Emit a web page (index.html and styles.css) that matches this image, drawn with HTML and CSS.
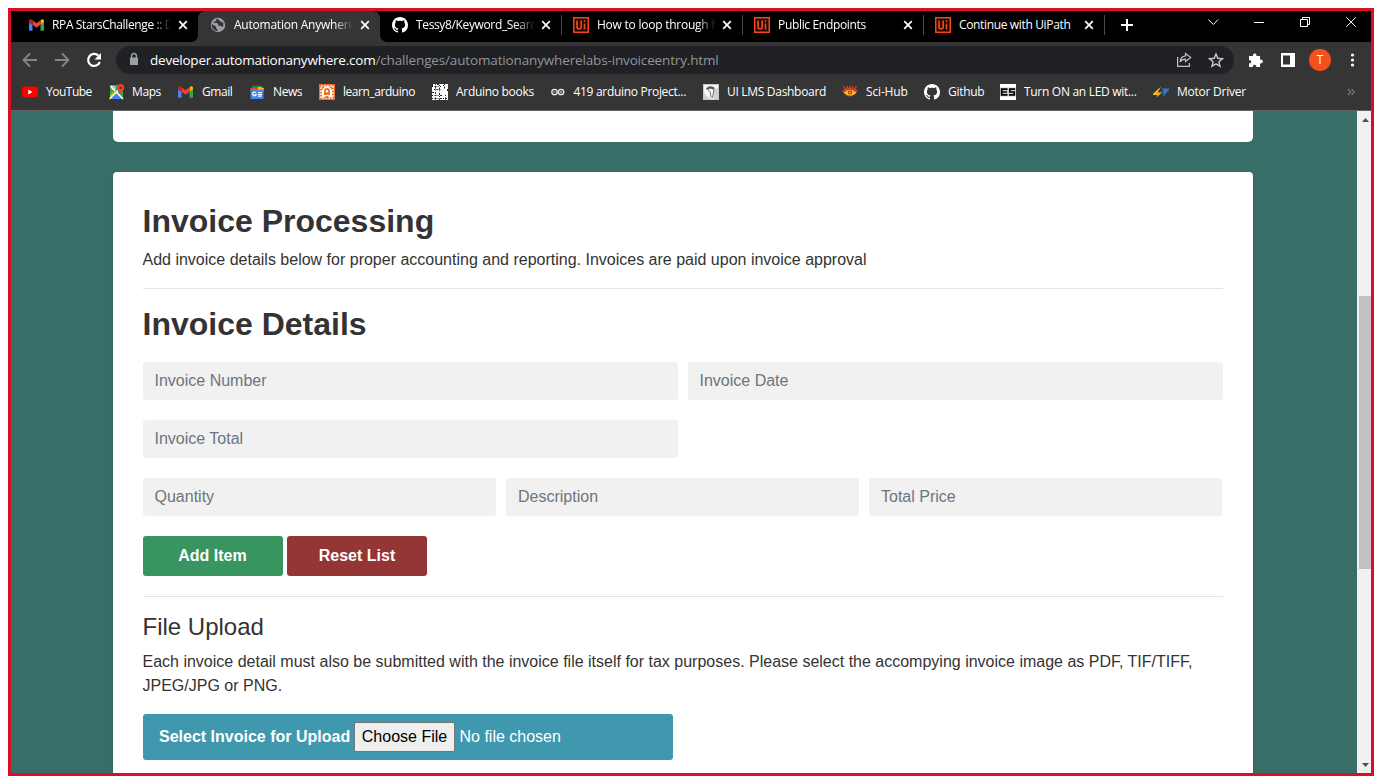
FILE: index.html
```html
<!DOCTYPE html>
<html lang="en">
<head>
<meta charset="utf-8">
<title>Automation Anywhere Labs - Invoice Entry</title>
<link rel="stylesheet" href="styles.css">
</head>
<body>
<svg class="defs" width="0" height="0">
  <symbol id="gmail" viewBox="0 0 16 12"><path fill="#4285f4" d="M1 12h2.700V5.800L0 3v8a1 1 0 0 0 1 1z"/><path fill="#34a853" d="M12.300 12H15a1 1 0 0 0 1-1V3l-3.700 2.800z"/><path fill="#fbbc04" d="M12.300 1v4.800L16 3V1.600C16 .2 14.400-.5 13.300.3z"/><path fill="#ea4335" d="M3.700 5.800V1L8 4.200 12.300 1v4.800L8 9z"/><path fill="#c5221f" d="M0 1.600V3l3.700 2.800V1L2.700.3C1.600-.5 0 .2 0 1.600z"/></symbol>
  <symbol id="github" viewBox="0 0 16 16"><path fill="#fff" d="M8 0C3.580 0 0 3.580 0 8c0 3.540 2.290 6.530 5.470 7.590.4.070.55-.17.55-.38 0-.19-.010-.82-.010-1.490-2.010.37-2.530-.49-2.690-.94-.090-.23-.48-.94-.82-1.130-.28-.15-.68-.52-.010-.53.63-.010 1.080.58 1.230.82.72 1.210 1.870.87 2.330.66.070-.52.28-.87.510-1.070-1.780-.2-3.640-.89-3.640-3.950 0-.87.310-1.590.82-2.150-.080-.2-.36-1.020.080-2.120 0 0 .67-.21 2.200.82.64-.18 1.320-.27 2-.27s1.360.090 2 .27c1.530-1.040 2.200-.82 2.200-.82.44 1.100.16 1.920.080 2.120.510.56.82 1.270.82 2.150 0 3.070-1.870 3.750-3.650 3.950.29.25.54.73.54 1.480 0 1.070-.010 1.930-.010 2.200 0 .21.15.46.55.38A8.010 8.010 0 0 0 16 8c0-4.420-3.580-8-8-8z"/></symbol>
  <symbol id="uipath" viewBox="0 0 16 16"><path fill="#1d0500" stroke="#fa4616" stroke-width="1.500" d="M.75.75h14.500v14.500H.75z"/><path fill="none" stroke="#fa4616" stroke-width="1.700" d="M4 3.500v6.300q0 2.200 2.100 2.200t2.100-2.200V3.500M11.500 6.500v6M11.500 3.300v1.800"/></symbol>
  <symbol id="cross" viewBox="0 0 10 10"><path fill="none" stroke="#fff" stroke-width="1.700" d="M1.200 1.200l7.600 7.600M8.800 1.200L1.200 8.800"/></symbol>
</svg>
<div class="window">
  <div class="tabs">
    <div class="tab"><svg class="fav"><use href="#gmail" x="0" y="2" width="15" height="12"/></svg><span class="title t1">RPA StarsChallenge :: D</span><svg class="x"><use href="#cross"/></svg></div>
    <div class="tab active"><svg class="fav" viewBox="0 0 16 16"><circle cx="8" cy="8" r="7.200" fill="#9aa0a6"/><path fill="#353535" d="M7.200 1.700 6 2.800v1.500H4.600L3.500 6H7l1.300 1.200v1.500h2.500L12.500 10l.8-1.200V5.500L11 5 9.300 3.300zM1.700 7l4.200 2.500.3 1.700 1.200 1.200v1.900L4.200 13 2 10.300z"/></svg><span class="title t2">Automation Anywhere</span><svg class="x"><use href="#cross"/></svg></div>
    <div class="tab"><svg class="fav"><use href="#github"/></svg><span class="title t3">Tessy8/Keyword_Searc</span><svg class="x"><use href="#cross"/></svg></div>
    <div class="tab sep"><svg class="fav"><use href="#uipath"/></svg><span class="title t4">How to loop through f</span><svg class="x"><use href="#cross"/></svg></div>
    <div class="tab sep"><svg class="fav"><use href="#uipath"/></svg><span class="title t5">Public Endpoints</span><svg class="x"><use href="#cross"/></svg></div>
    <div class="tab sep"><svg class="fav"><use href="#uipath"/></svg><span class="title t6">Continue with UiPath</span><svg class="x"><use href="#cross"/></svg></div>
    <div class="newtab sep"><svg width="12" height="12"><path stroke="#fff" stroke-width="2" d="M6 0v12M0 6h12"/></svg></div>
    <div class="controls">
      <svg viewBox="0 0 46 22"><path d="M18.500 8.500l4.800 5 4.800-5"/></svg>
      <svg viewBox="0 0 46 22"><path d="M18 11.500h10"/></svg>
      <svg viewBox="0 0 46 22"><path d="M18.500 8.500h7v7h-7zM20.500 8.500v-2h7v7h-2"/></svg>
      <svg viewBox="0 0 46 22"><path d="M18.300 6.300l9.500 9.500M27.800 6.300l-9.500 9.500"/></svg>
    </div>
  </div>
  <div class="toolbar">
    <svg class="cell dim" viewBox="0 0 32 32"><path d="M23 16H10M16 9.500 9.500 16l6.500 6.500"/></svg>
    <svg class="cell dim" viewBox="0 0 32 32"><path d="M9 16h13M16 9.500l6.500 6.500-6.500 6.500"/></svg>
    <svg class="cell" viewBox="0 0 32 32"><path fill="none" stroke="#fff" stroke-width="2.200" d="M21.800 18a6 6 0 1 1-1.300-6.200"/><path fill="#fff" d="M23 9v6.500h-6.500z"/></svg>
    <div class="omnibox">
      <svg class="cell" viewBox="0 0 32 32"><path fill="#9aa0a6" d="M12 13.500h8v7.500h-8z"/><path fill="none" stroke="#9aa0a6" stroke-width="1.400" d="M13.600 14v-2.100a2.400 2.400 0 0 1 4.800 0V14"/></svg>
      <div class="url"><span class="host">developer.automationanywhere.com</span><span class="path">/challenges/automationanywherelabs-invoiceentry.html</span></div>
      <svg class="cell" viewBox="0 0 32 32"><path fill="none" stroke="#bdc1c6" stroke-width="1.200" d="M9.600 13v9.400h11.800V19M17.500 9.500l5.200 4-5.200 4v-2.300c-2.500 0-4.300.8-5.500 2.800.3-3.500 2-5.800 5.500-6.200z"/></svg>
      <svg class="cell" viewBox="0 0 32 32"><path fill="none" stroke="#c8cbcf" stroke-width="1.400" d="M16 10l1.800 4.300 4.700.4-3.600 3.100 1.100 4.500-4-2.400-4 2.400 1.100-4.500-3.600-3.100 4.700-.4z"/></svg>
    </div>
    <svg class="cell" viewBox="0 0 32 32"><path fill="#fff" d="M9 12h4c-.6-3 3.600-3.300 3.500-.5V12H20v3.600c3.800-.4 3.800 4.200 0 3.800V23h-3.600c0-3-3.600-3-3.600 0H9v-3.600c3 0 3-3.500 0-3.500z"/></svg>
    <svg class="cell" viewBox="0 0 32 32"><path fill="#fff" fill-rule="evenodd" d="M9 9h14v14H9zM11 11.500v9h7v-9z"/></svg>
    <div class="cell"><span class="avatar">T</span></div>
    <svg class="cell" viewBox="0 0 32 32"><g fill="#fff"><circle cx="16.500" cy="11" r="1.600"/><circle cx="16.500" cy="16" r="1.600"/><circle cx="16.500" cy="21" r="1.600"/></g></svg>
  </div>
  <div class="bookmarks">
    <div class="bm"><svg viewBox="0 0 16 16"><rect y="2.500" width="16" height="11" rx="3" fill="#f00"/><path fill="#fff" d="M6.300 5.500v5L10.500 8z"/></svg><span class="b1">YouTube</span></div>
    <div class="bm"><svg viewBox="0 0 16 16"><path fill="#34a853" d="M1 1h13v14H1z"/><path fill="#4285f4" d="M8 8.500 14.500 15H2z"/><path stroke="#fff" stroke-width="1.500" d="M.5 15 11 4.500M1.500 2l12.500 13"/><path stroke="#fbbc04" stroke-width="1.500" d="M1 12.500 7 6.500"/><circle cx="4.500" cy="4" r="1.600" fill="none" stroke="#fff"/><path fill="#ea4335" d="M11.500 0a3.700 3.700 0 0 1 3.700 3.700c0 2.500-2.700 3.800-3.700 6.800-1-3-3.700-4.300-3.700-6.800A3.700 3.700 0 0 1 11.500 0z"/><circle cx="11.500" cy="3.700" r="1.200" fill="#8c1a11"/></svg><span class="b2">Maps</span></div>
    <div class="bm"><svg><use href="#gmail" x="0" y="2" width="15" height="12"/></svg><span class="b3">Gmail</span></div>
    <div class="bm"><svg viewBox="0 0 16 16"><path fill="#188038" d="M3 1.500h10V6H3z"/><path fill="#fbbc04" d="M9 2.500l6 1.500-1 5H8z"/><path fill="#ea4335" d="M1 4l7-1v4H2z"/><rect x="1.500" y="5.500" width="13" height="9.500" rx="1" fill="#4285f4"/><path fill="none" stroke="#fff" stroke-width="1.200" d="M7 8.700a1.900 1.900 0 1 0 .3 1.900H5.500M9 8.500h4M9 10.300h4M9 12.100h3.500"/></svg><span class="b4">News</span></div>
    <div class="bm"><svg viewBox="0 0 16 16"><path fill="#e8742a" d="M0 0h16v16H0z"/><path fill="none" stroke="#fff" stroke-width="1.500" stroke-dasharray="1.700 1.300" d="M2 2h12v12H2z"/><path fill="#fff" d="M3 13V6l3-3.500h4L13 6v7z"/><path fill="#e8742a" d="M5 11V7q0-3 3-3t3 3v4zM6.500 12h3v2h-3z"/><circle cx="8" cy="7.300" r="1.200" fill="#fff"/></svg><span class="b5">learn_arduino</span></div>
    <div class="bm"><svg viewBox="0 0 16 16"><path fill="#fff" d="M0 0h16v16H0z"/><path fill="none" stroke="#222" stroke-width="1" stroke-dasharray="1 1.500 2 1" d="M0 2.500h9M2 5.500h7M0 11.500h10M0 14.500h15M3.500 0v16M7.500 1v15M12.500 0v5M13.500 11v5"/><path fill="#222" d="M0 0h1v2H0zM5 0h2v1H5zM11 1h1v1h-1zM15 5h1v2h-1zM0 8h2v1H0z"/></svg><span class="b6">Arduino books</span></div>
    <div class="bm"><svg viewBox="0 0 16 16"><g fill="#26343b" stroke="#e8edef" stroke-width="1.300"><circle cx="4.500" cy="8" r="2.700"/><circle cx="11.100" cy="8" r="2.700"/></g><path stroke="#e8edef" stroke-width=".7" d="M3.300 8h2.400M9.900 8h2.400M11.100 6.800v2.400"/></svg><span class="b7">419 arduino Project...</span></div>
    <div class="bm"><svg viewBox="0 0 16 16"><path fill="#c9c9c9" d="M0 0h16v16H0z"/><path fill="#f6f6f6" d="M1 1h14v14H1z"/><path fill="#d0d0d0" d="M1 9l6 6H1zM10 6l5-2v11h-4z"/><path fill="#555" d="M3 4.500q4-4 9-.5l-1.500 1.500-3.500-1-3 1.500z"/><path fill="none" stroke="#777" d="M4 5q3 1 3.500 4l.5 5M11 5l-1.500 9"/></svg><span class="b8">UI LMS Dashboard</span></div>
    <div class="bm"><svg viewBox="0 0 16 16"><path fill="none" stroke="#d9422b" stroke-width="1.300" d="M1.500 2.500l2.500 3M5 2l1 3M8 1.700V5M11 2l-1 3M14.500 2.500l-2.500 3"/><path fill="#d9422b" d="M0 6.500q8-5 16 0-1.500 1-2 3-6 6-12 0Q1.500 7.500 0 6.500z"/><path fill="#f7c325" d="M1.500 8.700q6.500-5.400 13 0-6.500 5.400-13 0z"/><circle cx="8" cy="8.500" r="2.100" fill="#b5281b"/><circle cx="8" cy="8.500" r=".9" fill="#f7c325"/></svg><span class="b9">Sci-Hub</span></div>
    <div class="bm"><svg><use href="#github"/></svg><span class="b10">Github</span></div>
    <div class="bm"><svg viewBox="0 0 16 16"><path fill="#fff" d="M0 0h16v16H0z"/><path fill="#ccc" d="M0 3.500h16v9H0z"/><path fill="none" stroke="#000" stroke-width="1.700" d="M7.500 5.200H1.700v5.700h5.800M2 8h5M15 5.200H9.900V8h4.300v2.900H9"/></svg><span class="b11">Turn ON an LED wit...</span></div>
    <div class="bm"><svg viewBox="0 0 16 16"><path fill="#f4b51e" d="M8 2.500 0 9.800V11h4.500L3.500 13.500 9 8.500H4.800z"/><path fill="#3478c0" d="M8.500 4.500H16V6l-6.500 7.500 1.300-4.800H8L7.500 7.500l3.700-.3z"/></svg><span class="b12">Motor Driver</span></div>
    <svg class="more" viewBox="0 0 8 8"><path fill="none" stroke="#777" stroke-width="1.200" d="M.8 1l3 3-3 3M4.500 1l3 3-3 3"/></svg>
  </div>
  <div class="viewport">
    <main class="page">
      <section class="card previous"></section>
      <section class="card">
        <h1>Invoice Processing</h1>
        <p>Add invoice details below for proper accounting and reporting. Invoices are paid upon invoice approval</p>
        <hr>
        <h1>Invoice Details</h1>
        <div class="row two"><input placeholder="Invoice Number"><input placeholder="Invoice Date"></div>
        <div class="row two"><input placeholder="Invoice Total"></div>
        <div class="row three"><input placeholder="Quantity"><input placeholder="Description"><input placeholder="Total Price"></div>
        <div class="buttons"><button class="btn add">Add Item</button><button class="btn reset">Reset List</button></div>
        <hr>
        <h4>File Upload</h4>
        <p>Each invoice detail must also be submitted with the invoice file itself for tax purposes. Please select the accompying invoice image as PDF, TIF/TIFF, JPEG/JPG or PNG.</p>
        <div class="upload"><b>Select Invoice for Upload</b><button class="choose">Choose File</button><span>No file chosen</span></div>
      </section>
    </main>
    <div class="scrollbar">
      <svg width="7" height="4"><path fill="#505050" d="M0 4 3.500 0 7 4z"/></svg>
      <div class="thumb"></div>
      <svg width="7" height="4"><path fill="#505050" d="M0 0h7L3.500 4z"/></svg>
    </div>
  </div>
</div>
</body>
</html>
```
FILE: styles.css
```css
* { box-sizing: border-box; }
body { margin: 0; padding: 8px; background: #fff; height: 784px; overflow: hidden; font-family: "Liberation Sans", Arial, sans-serif; }
.defs { position: absolute; }
.window { width: 1366px; height: 768px; border: 3px solid #d91023; display: flex; flex-direction: column; overflow: hidden; background: #353535; }
svg { display: block; flex: none; }

.tabs, .toolbar, .bookmarks { font-family: "Open Sans", "Noto Sans", sans-serif; color: #fff; display: flex; }
.tabs { height: 31px; background: #000; padding-left: 7px; font-size: 12px; flex: none; }
.tab { width: 181px; height: 31px; display: flex; align-items: center; padding: 0 0 3px 12px; flex: none; }
.tab.active { background: #353535; border-radius: 7px 7px 0 0; box-shadow: -7px 7px 0 #353535, 7px 7px 0 #353535; }
.tab:first-child { width: 180px; padding-left: 11px; border-radius: 0 0 7px 0; background: #000; z-index: 1; }
.tab.active { width: 182px; }
.tab:nth-child(3) { border-radius: 0 0 0 7px; background: #000; z-index: 1; }
.sep { background: linear-gradient(#4a4a4a, #4a4a4a) 0 4px / 1px 20px no-repeat; }
.fav { width: 16px; height: 16px; margin-right: 8px; }
.title { width: 119px; margin-right: 6px; overflow: hidden; white-space: nowrap; mask-image: linear-gradient(90deg, #000 100px, transparent 119px); line-height: 18px; }
.tab:first-child .fav { margin-right: 7px; }
.tab:first-child .title { width: 120px; }
.tab.active .title { width: 120px; }
.t1 { letter-spacing: -.37px; }
.t2 { letter-spacing: -.23px; }
.t3 { letter-spacing: -.36px; }
.t4 { letter-spacing: -.24px; }
.t5 { letter-spacing: -.33px; }
.t6 { letter-spacing: -.35px; mask-image: none; }
.tab .x { width: 10px; height: 10px; }
.newtab { width: 46px; display: flex; align-items: center; justify-content: center; padding-bottom: 3px; }
.controls { display: flex; margin-left: auto; margin-right: -3px; }
.controls svg { width: 46px; height: 22px; fill: none; stroke: #fff; stroke-width: 1; }

.toolbar { height: 36px; align-items: center; padding: 0 3px; flex: none; }
.cell { width: 32px; height: 32px; flex: none; display: flex; align-items: center; justify-content: center; }
.dim { fill: none; stroke: #868686; stroke-width: 1.8; }
.omnibox { height: 28px; flex: 1; margin: 0 6px; padding: 0 2px; border-radius: 14px; background: #202124; display: flex; align-items: center; }
.url { flex: 1; font-size: 13.5px; white-space: nowrap; line-height: 20px; }
.host { letter-spacing: -.22px; }
.path { color: #929599; letter-spacing: -.15px; }
.avatar { width: 22px; height: 22px; border-radius: 50%; background: #f4511e; text-align: center; line-height: 22px; font-size: 12px; }

.bookmarks { height: 33px; flex: none; padding: 0 16px 4px 11px; display: grid; grid-template-columns: 87px 69px 71px 70px 113px 118px 153px 139px 82px 76px 153px 1fr 8px; align-items: center; border-bottom: 1px solid #656565; font-size: 12px; }
.bm { height: 16px; display: flex; align-items: center; gap: 8px; white-space: nowrap; line-height: 18px; }
.bm span { margin-top: -1px; }
.bm svg { width: 16px; height: 16px; }
.more { width: 8px; height: 8px; }
.b1 { letter-spacing: -.5px; }
.b2 { letter-spacing: -.4px; margin-left: -1px; }
.b3 { letter-spacing: -.45px; }
.b4 { letter-spacing: -.4px; }
.b5 { letter-spacing: -.45px; }
.b6 { letter-spacing: -.3px; }
.b7 { letter-spacing: -.31px; margin-left: -.5px; }
.b8 { letter-spacing: -.3px; }
.b9 { letter-spacing: -.15px; }
.b10 { letter-spacing: -.3px; }
.b11 { letter-spacing: -.3px; }
.b12 { letter-spacing: -.25px; }

.viewport { flex: 1; min-height: 0; display: flex; background: #386e67; }
.page { flex: 1; padding-left: 102px; overflow: hidden; }
.card { width: 1140px; height: 700px; background: #fff; border-radius: 4px; padding: 30px; margin-bottom: 30px; box-shadow: 0 2px 3px rgba(0, 0, 0, .12); }
.card.previous { height: 31px; border-radius: 0 0 5px 5px; padding: 0; box-shadow: none; }
h1 { margin: 0 0 8px; font-size: 32px; line-height: 38px; color: #333; text-indent: -.5px; }
hr { margin: 16px 0; border: 0; height: 1px; background: #e3e3e3; }
hr + h1 { margin-bottom: 19px; }
p { margin: 0 0 0 -.5px; font-size: 16px; line-height: 24px; color: #333; }
.row { display: grid; gap: 10px; margin-bottom: 20px; }
.two { grid-template-columns: 535px 535px; }
.three { grid-template-columns: 353px 353px 353px; }
input { width: 100%; height: 38px; border: 0; border-radius: 3px; background: #f1f1f1; padding: 0 11.5px 1px; font: 16px "Liberation Sans", Arial, sans-serif; }
.three input + input { padding-left: 12px; }
input::placeholder { color: #6c757d; opacity: 1; }
.buttons { display: flex; gap: 4px; margin-bottom: 20px; }
.btn { width: 140px; height: 40px; border: 0; border-radius: 3px; padding: 0 0 1px; color: #fff; font: bold 16px "Liberation Sans", Arial, sans-serif; }
.add { padding-right: 1px; background: #39955f; }
.reset { background: #943636; }
h4 { margin: -1px 0 9px -.5px; font-size: 24px; font-weight: 400; line-height: 29px; color: #333; }
.upload { margin-top: 16px; width: 530px; height: 46px; border-radius: 3px; background: #3f98ae; color: #fff; display: flex; align-items: center; padding-left: 16px; font-size: 16px; white-space: nowrap; }
.upload b { width: 195px; }
.choose { width: 101px; height: 30px; margin-right: 4.5px; padding: 0 0 1px; border: 1px solid #767676; border-radius: 2px; background: #efefef; color: #000; font: 16px "Liberation Sans", Arial, sans-serif; }
.scrollbar { width: 14px; background: #f1f1f1; display: flex; flex-direction: column; align-items: center; padding: 7px 0 6px 2px; }
.scrollbar svg:last-child { margin-top: auto; }
.thumb { width: 12px; height: 273px; margin-top: 174px; background: #c1c1c1; }
```
